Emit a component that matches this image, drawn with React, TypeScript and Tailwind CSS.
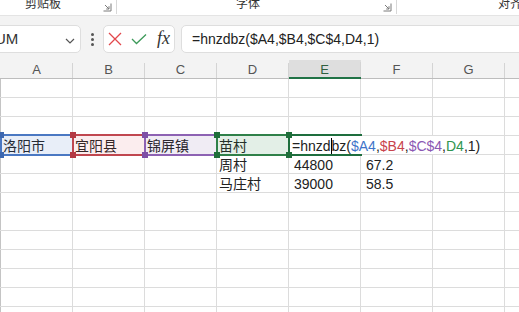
import React from "react";

const COLS = ["A", "B", "C", "D", "E", "F", "G", "H"];

type Cell = { t: string; num?: boolean };
const DATA: Record<number, Record<string, Cell>> = {
  4: { A: { t: "洛阳市" }, B: { t: "宜阳县" }, C: { t: "锦屏镇" }, D: { t: "苗村" } },
  5: { D: { t: "周村" }, E: { t: "44800", num: true }, F: { t: "67.2", num: true } },
  6: { D: { t: "马庄村" }, E: { t: "39000", num: true }, F: { t: "58.5", num: true } },
};

function Launcher() {
  return (
    <svg width="9" height="9" viewBox="0 0 9 9" className="block">
      <path d="M8 0.5 V8 H0.5" fill="none" stroke="#7a7a7a" strokeWidth="1" />
      <path d="M2 2 L6 6 M6 3.2 V6 H3.2" fill="none" stroke="#7a7a7a" strokeWidth="1" />
    </svg>
  );
}

type Box = { left: number; border: string; fill: string; handle: string };
const BOXES: Box[] = [
  { left: 0, border: "border-[#4a78c2]", fill: "bg-[#4472c4]/[0.12]", handle: "bg-[#3d68b0]" },
  { left: 72, border: "border-[#c0474f]", fill: "bg-[#d9505a]/[0.10]", handle: "bg-[#b43a44]" },
  { left: 144, border: "border-[#8d62b3]", fill: "bg-[#8064a2]/[0.12]", handle: "bg-[#7e4fa6]" },
  { left: 216, border: "border-[#2f8049]", fill: "bg-[#3b8f55]/[0.14]", handle: "bg-[#1f6e3a]" },
];

export default function App() {
  const rows = Array.from({ length: 13 }, (_, i) => i + 1);
  return (
    <div
      className="w-[519px] h-[312px] overflow-hidden bg-white text-[#222]"
      style={{ fontFamily: '"Liberation Sans", "Noto Sans CJK SC", sans-serif' }}
    >
      {/* ribbon group labels */}
      <div className="h-[16px] bg-white border-b border-[#e4e4e4] flex overflow-hidden text-[12px] leading-[12px] text-[#333]">
        <div className="w-[117px] flex shrink-0">
          <span className="ml-[25px] -mt-[2px]">剪贴板</span>
          <span className="ml-auto mt-[3px] mr-[4px]">
            <Launcher />
          </span>
          <span className="w-px h-[14px] bg-[#d8d8d8]" />
        </div>
        <div className="w-[280px] flex shrink-0">
          <span className="ml-[119px] -mt-[2px]">字体</span>
          <span className="ml-auto mt-[3px] mr-[4px]">
            <Launcher />
          </span>
          <span className="w-px h-[14px] bg-[#d8d8d8]" />
        </div>
        <div className="flex shrink-0">
          <span className="ml-[101px] -mt-[2px] whitespace-nowrap">对齐</span>
        </div>
      </div>

      {/* formula bar */}
      <div className="h-[44px] bg-[#f3f3f3] flex items-start pt-[9px]">
        <div className="-ml-[20px] w-[101px] h-[28px] shrink-0 bg-white border border-[#dedede] rounded-[5px] flex items-center justify-between pl-[4px] pr-[5px]">
          <span className="text-[15px] text-[#333]">SUM</span>
          <svg width="10" height="6" viewBox="0 0 10 6" className="mt-[3px]">
            <polyline points="1,1 5,5 9,1" fill="none" stroke="#555" strokeWidth="1.2" />
          </svg>
        </div>
        <div className="ml-[10px] h-[28px] flex flex-col justify-center gap-[2px]">
          <span className="w-[3px] h-[3px] rounded-full bg-[#555]" />
          <span className="w-[3px] h-[3px] rounded-full bg-[#555]" />
          <span className="w-[3px] h-[3px] rounded-full bg-[#555]" />
        </div>
        <div className="ml-[9px] w-[72px] h-[28px] shrink-0 bg-white border border-[#dedede] rounded-[5px] flex items-center pl-[4px]">
          <svg width="14" height="14" viewBox="0 0 14 14">
            <path d="M1 1 L13 13 M13 1 L1 13" stroke="#e2474c" strokeWidth="1.3" fill="none" />
          </svg>
          <svg width="16" height="12" viewBox="0 0 16 12" className="ml-[9px]">
            <polyline points="1,6 5.5,10.5 15,1.5" stroke="#3d9a5a" strokeWidth="1.3" fill="none" />
          </svg>
          <span
            className="ml-[10px] text-[18px] leading-[18px] italic text-[#333] -mt-[2px]"
            style={{ fontFamily: '"Liberation Serif", serif' }}
          >
            fx
          </span>
        </div>
        <div className="ml-[6px] flex-1 -mr-[10px] h-[28px] bg-white border border-[#dedede] rounded-[5px] flex items-center pl-[10px] text-[14px] text-[#222] whitespace-nowrap">
          =hnzdbz($A4,$B4,$C$4,D4,1)
        </div>
      </div>

      {/* column headers */}
      <div className="h-[19px] bg-[#f3f3f3] flex">
        {COLS.map((c, i) => {
          const active = c === "E";
          return (
            <div
              key={c}
              className={`${i === 0 ? "w-[73px] pl-px" : "w-[72px]"} shrink-0 h-[19px] flex ${
                active ? "bg-[#dedede] border-b-2 border-[#217346]" : "border-b border-[#bdbdbd]"
              }`}
            >
              <span
                className={`flex-1 flex items-center justify-center pt-[2px] text-[13px] ${
                  active ? "text-[#2f5f3f]" : "text-[#555]"
                }`}
              >
                {c}
              </span>
              <span className="w-px h-[15px] self-end bg-[#d4d4d4]" />
            </div>
          );
        })}
      </div>

      {/* grid */}
      <div className="relative">
        {rows.map((r) => (
          <div key={r} className="h-[19px] flex border-b border-[#dcdcdc]">
            {COLS.map((c, i) => {
              const cell = DATA[r]?.[c];
              return (
                <div
                  key={c}
                  className={`${
                    i === 0 ? "w-[73px] border-l border-l-[#c4c4c4]" : "w-[72px]"
                  } shrink-0 border-r border-[#dcdcdc] flex items-end overflow-visible whitespace-nowrap text-[14px] leading-[16px] ${
                    cell?.num ? "pl-[5px]" : "pl-[2px]"
                  }`}
                >
                  {cell ? cell.t : ""}
                </div>
              );
            })}
          </div>
        ))}

        {/* reference range boxes */}
        {BOXES.map((b, i) => (
          <React.Fragment key={i}>
            <div
              className={`absolute top-[55px] h-[22px] w-[74px] border-2 ${b.border} ${b.fill}`}
              style={{ left: b.left }}
            />
          </React.Fragment>
        ))}
        {BOXES.map((b, i) => (
          <React.Fragment key={"h" + i}>
            <span className={`absolute w-[6px] h-[6px] top-[53px] ${b.handle}`} style={{ left: b.left - 2 }} />
            <span className={`absolute w-[6px] h-[6px] top-[73px] ${b.handle}`} style={{ left: b.left - 2 }} />
            <span className={`absolute w-[6px] h-[6px] top-[53px] ${b.handle}`} style={{ left: b.left + 70 }} />
            <span className={`absolute w-[6px] h-[6px] top-[73px] ${b.handle}`} style={{ left: b.left + 70 }} />
          </React.Fragment>
        ))}

        {/* editor background over overflow area */}
        <div className="absolute left-[361px] top-[57px] h-[18px] w-[122px] bg-white" />
        {/* active cell border */}
        <div className="absolute left-[288px] top-[55px] h-[22px] w-[74px] border-2 border-r-0 border-[#1e6e3e] bg-white" />
        <span className="absolute w-[6px] h-[6px] top-[53px] left-[286px] bg-[#1f6e3a]" />
        <span className="absolute w-[6px] h-[6px] top-[73px] left-[286px] bg-[#1f6e3a]" />

        {/* in-cell editor text */}
        <div className="absolute left-[289px] top-[57px] h-[18px] flex items-end pl-[3px] whitespace-nowrap text-[14px] leading-[16px] text-[#222]">
          <span>
            =hnzd
            <span className="inline-block w-px h-[16px] bg-black align-[-3px]" />
            bz(
            <span className="text-[#3f74c9]">$A4</span>,
            <span className="text-[#c8434c]">$B4</span>,
            <span className="text-[#8a58b3]">$C$4</span>,
            <span className="text-[#2f9550]">D4</span>,1)
          </span>
        </div>
      </div>
    </div>
  );
}
